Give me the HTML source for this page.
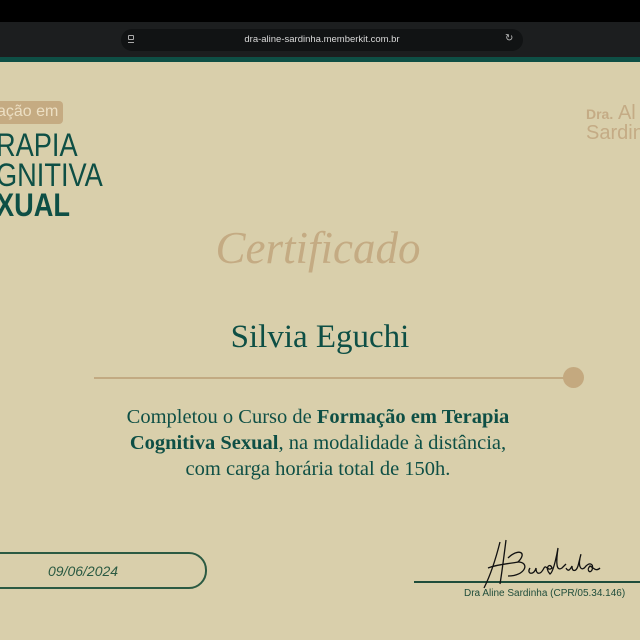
<!DOCTYPE html>
<html><head><meta charset="utf-8"><style>
*{margin:0;padding:0;box-sizing:border-box}
body{width:640px;height:640px;overflow:hidden;background:#d9cfab;position:relative;font-family:"Liberation Serif",serif}
.a{position:absolute;white-space:nowrap}
.sans{font-family:"Liberation Sans",sans-serif}
</style></head><body>
<div class="a" style="left:0;top:0;width:640px;height:22px;background:#000"></div>
<div class="a" style="left:0;top:22px;width:640px;height:35px;background:#1c1e1f"></div>
<div class="a" style="left:121px;top:29px;width:402px;height:22px;border-radius:11px;background:#111314"></div>
<div class="a sans" style="left:121px;top:34px;width:402px;text-align:center;font-size:9.5px;color:#d8d8d8">dra-aline-sardinha.memberkit.com.br</div>
<div class="a" style="left:128px;top:35px;width:6px;height:5px;border:1px solid #aaa;border-radius:1px"></div>
<div class="a" style="left:128px;top:42px;width:6px;height:1px;background:#aaa"></div>
<div class="a sans" style="left:505px;top:33px;font-size:10px;color:#bbb">↻</div>
<div class="a" style="left:0;top:57px;width:640px;height:5px;background:#0e4f45"></div>

<div class="a" style="left:0;top:101px;width:63px;height:23px;background:#c5ab82;border-radius:0 4px 4px 0"></div>
<div class="a sans" style="left:-3px;top:103px;font-size:16px;color:#ecdfc3">ação em</div>
<div class="a sans" style="left:-4px;top:130px;font-size:32px;line-height:30px;color:#0e4f45;transform:scaleX(0.85);transform-origin:0 0">RAPIA<br>GNITIVA<br><b>XUAL</b></div>

<div class="a sans" style="left:586px;top:104px;font-size:17px;line-height:19px;color:#c4ab85"><b style="font-size:14px">Dra.</b> <span style="font-size:20px">Al</span><br><span style="font-size:20px">Sardin</span></div>

<div class="a" style="left:0;top:222px;width:636px;text-align:center;font-size:45px;font-style:italic;color:#c4ab83">Certificado</div>
<div class="a" style="left:0;top:319px;width:640px;text-align:center;font-size:33px;color:#0e4f45">Silvia Eguchi</div>
<div class="a" style="left:94px;top:377px;width:478px;height:2px;background:#c2aa82"></div>
<div class="a" style="left:563px;top:367px;width:21px;height:21px;border-radius:50%;background:#c4a97f"></div>
<div class="a" style="left:0;top:404px;width:636px;text-align:center;font-size:20.5px;line-height:26px;color:#0e4f45">Completou o Curso de <b>Formação em Terapia</b><br><b>Cognitiva Sexual</b>, na modalidade à distância,<br>com carga horária total de 150h.</div>

<div class="a" style="left:-20px;top:552px;width:227px;height:37px;border:2px solid #2b5a42;border-radius:18px"></div>
<div class="a sans" style="left:48px;top:563px;font-size:14px;font-style:italic;color:#2b5a42">09/06/2024</div>

<div class="a" style="left:414px;top:581px;width:226px;height:2px;background:#1f4d3b"></div>
<svg class="a" style="left:478px;top:538px" width="130" height="52" viewBox="0 0 130 52" fill="none" stroke="#111" stroke-width="1.3">
<path d="M22 4 C18 20 12 38 6 50 M28 2 C26 18 24 34 22 46 M10 30 C20 26 30 26 40 24"/>
<path d="M30 20 C40 10 50 14 40 24 C52 24 48 38 30 38"/>
<path d="M52 30 C48 36 56 38 58 30 C58 36 62 38 66 30 C68 26 70 34 74 30 C72 24 66 30 72 36 C76 34 80 10 80 10 C78 24 78 34 84 30 L88 26 M88 30 C90 34 92 32 94 28 C94 34 98 34 100 28 C102 20 104 12 102 20 C100 30 104 34 108 28 C112 24 116 26 114 32 C112 36 108 32 112 28 C116 30 118 34 122 30"/>
</svg>
<div class="a sans" style="left:464px;top:588px;font-size:10px;color:#1f4d3b">Dra Aline Sardinha (CPR/05.34.146)</div>
</body></html>
